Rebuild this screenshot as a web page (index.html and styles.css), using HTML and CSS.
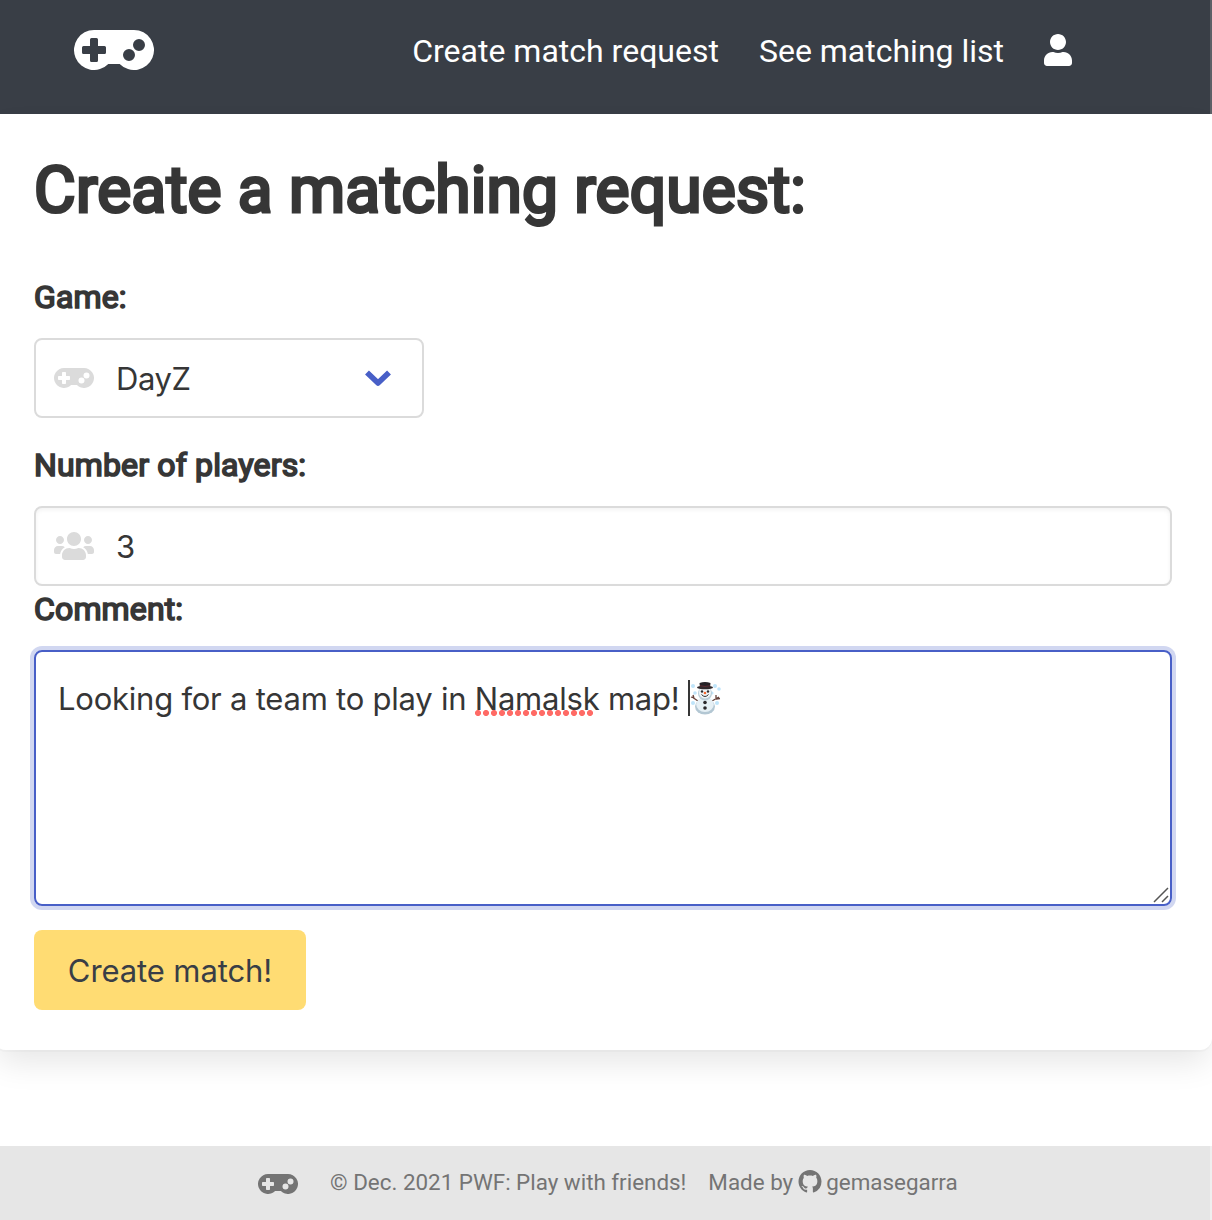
FILE: index.html
```html
<!DOCTYPE html>
<html lang="en">
<head>
<meta charset="utf-8">
<title>Play with friends</title>
<link rel="stylesheet" href="styles.css">
</head>
<body>
<svg class="defs" width="0" height="0" aria-hidden="true">
  <symbol id="gamepad" viewBox="0 96 640 320"><path fill-rule="evenodd" d="M480 96H160a160 160 0 1 0 114.240 272h91.520A160 160 0 1 0 480 96zM256 276a12 12 0 0 1-12 12h-52v52a12 12 0 0 1-12 12h-40a12 12 0 0 1-12-12v-52H76a12 12 0 0 1-12-12v-40a12 12 0 0 1 12-12h52v-52a12 12 0 0 1 12-12h40a12 12 0 0 1 12 12v52h52a12 12 0 0 1 12 12zM440 344a48 48 0 1 1 0-96a48 48 0 0 1 0 96zM520 264a48 48 0 1 1 0-96a48 48 0 0 1 0 96z"/></symbol>
</svg>
<nav class="navbar">
  <svg class="logo"><use href="#gamepad"/></svg>
  <div class="menu">
    <a class="link">Create match request</a>
    <a class="link">See matching list</a>
    <svg class="user" viewBox="0 0 448 512"><path d="M224 256c70.700 0 128-57.300 128-128S294.700 0 224 0 96 57.300 96 128s57.300 128 128 128zm89.600 32h-16.700c-22.200 10.200-46.900 16-72.900 16s-50.600-5.800-72.900-16h-16.700C60.200 288 0 348.200 0 422.400V464c0 26.500 21.500 48 48 48h352c26.500 0 48-21.500 48-48v-41.600c0-74.200-60.200-134.400-134.400-134.400z"/></svg>
  </div>
</nav>
<main class="box">
  <h1 class="title">Create a matching request:</h1>
  <div class="label">Game:</div>
  <div class="control select">
    <svg class="icon pad"><use href="#gamepad"/></svg>
    <span class="value">DayZ</span>
    <svg class="arrow" viewBox="0 0 28 18"><path d="M3 3.500l11 10.500L25 3.500"/></svg>
  </div>
  <div class="label">Number of players:</div>
  <div class="control input">
    <svg class="icon" viewBox="0 0 640 512"><path d="M96 224c35.300 0 64-28.700 64-64s-28.700-64-64-64-64 28.700-64 64 28.700 64 64 64zm448 0c35.300 0 64-28.700 64-64s-28.700-64-64-64-64 28.700-64 64 28.700 64 64 64zm32 32h-64c-17.600 0-33.500 7.100-45.100 18.600 40.300 22.100 68.900 62 75.100 109.400h66c17.700 0 32-14.300 32-32v-32c0-35.300-28.700-64-64-64zm-256 0c61.900 0 112-50.100 112-112S381.900 32 320 32 208 82.100 208 144s50.100 112 112 112zm76.800 32h-8.300c-20.800 10-43.900 16-68.500 16s-47.600-6-68.500-16h-8.300C179.600 288 128 339.600 128 403.200V432c0 26.500 21.500 48 48 48h288c26.500 0 48-21.500 48-48v-28.800c0-63.600-51.600-115.200-115.200-115.200zm-223.700-13.400C161.500 263.100 145.600 256 128 256H64c-35.300 0-64 28.700-64 64v32c0 17.700 14.300 32 32 32h65.900c6.300-47.400 34.900-87.300 75.200-109.400z"/></svg>
    <span class="value">3</span>
  </div>
  <div class="label">Comment:</div>
  <div class="textarea">
    <p class="comment">Looking for a team to play in <span class="misspelt">Namalsk</span> map! </p>
    <i class="caret"></i>
    <svg class="snowman" viewBox="0 0 32 34">
      <g fill="#bfe4fa"><circle cx="3" cy="5" r="2"/><circle cx="5" cy="12" r="1.800"/><circle cx="25" cy="5" r="2"/><circle cx="29" cy="8" r="1.800"/><circle cx="27" cy="22" r="2"/><circle cx="3" cy="22" r="2"/><circle cx="22" cy="12" r="1.500"/></g>
      <path d="M8 20L2 16M4 17l-3-1M4 17l-1-3M22 20l7-4M26 17l0-3M26 18l4-.5" fill="none" stroke="#65413a" stroke-width="1.300"/>
      <ellipse cx="15" cy="25.500" rx="10" ry="8" fill="#b3c7d3"/>
      <ellipse cx="15" cy="23.500" rx="8.800" ry="7.500" fill="#e6f0f5"/>
      <circle cx="15" cy="12.500" r="7" fill="#bccfd9"/><circle cx="15" cy="11.500" r="6" fill="#eef4f7"/>
      <path d="M9.500 2q5.500-2 11 0l-.5 5q-5 2-10 0z" fill="#252226"/>
      <ellipse cx="15" cy="6.500" rx="8" ry="1.800" fill="#30292c"/>
      <path d="M10 4.700q5 1.500 10 0" stroke="#6b2c33" stroke-width=".8" fill="none"/>
      <g fill="#2b292c"><circle cx="12" cy="10.500" r="1.200"/><circle cx="18" cy="10.500" r="1.200"/><circle cx="15" cy="21.500" r="1.800"/><circle cx="15" cy="27" r="1.800"/></g>
      <path d="M11.500 13.500q3.500 4 7 0" stroke="#333" fill="none"/><circle cx="15" cy="12" r="1.300" fill="#f4672e"/>
    </svg>
    <svg class="grip" viewBox="0 0 16 16"><path d="M1 15L15 1M9 15l6-6"/></svg>
  </div>
  <button class="button">Create match!</button>
</main>
<footer class="footer">
  <svg class="foot-logo"><use href="#gamepad"/></svg>
  <span class="copy">© Dec. 2021 PWF: Play with friends!</span>
  <span class="made">Made by</span>
  <svg class="github" viewBox="0 0 16 16"><path d="M8 0C3.580 0 0 3.580 0 8c0 3.540 2.290 6.530 5.470 7.590.4.070.550-.170.550-.380 0-.190-.010-.820-.010-1.490-2.010.370-2.530-.490-2.690-.940-.090-.230-.480-.940-.820-1.130-.280-.150-.680-.520-.010-.530.630-.010 1.080.580 1.230.820.720 1.210 1.870.870 2.330.660.070-.520.280-.870.510-1.070-1.780-.2-3.640-.890-3.640-3.950 0-.870.310-1.590.820-2.150-.080-.2-.360-1.020.080-2.120 0 0 .670-.210 2.200.820.640-.180 1.320-.270 2-.270s1.360.090 2 .270c1.530-1.040 2.200-.820 2.200-.820.440 1.100.160 1.920.080 2.120.510.560.820 1.270.820 2.150 0 3.070-1.870 3.750-3.650 3.950.290.250.540.730.540 1.480 0 1.070-.010 1.930-.010 2.200 0 .210.150.460.550.380A8.010 8.010 0 0 0 16 8c0-4.420-3.580-8-8-8z"/></svg>
  <span class="author">gemasegarra</span>
</footer>
</body>
</html>
```

FILE: styles.css
```css
* { box-sizing: border-box; }
body { margin: 0; background: #fff; color: #363636; font-family: Roboto, sans-serif; font-size: 32px; line-height: 48px; overflow: hidden; }
svg { display: block; flex: none; }
.defs { display: none; }

.navbar { display: flex; align-items: flex-start; justify-content: space-between; height: 114px; padding: 26px 138px 0 74px; background: #393e46; border-right: 2px solid #5d6067; color: #fff; }
.logo { width: 80px; height: 40px; margin-top: 4px; fill: #fff; }
.menu { display: flex; }
.link { margin-right: 40px; padding-top: 1px; white-space: nowrap; }
.user { width: 28px; height: 32px; margin-top: 8px; fill: #fff; }

.box { height: 936px; margin-left: -6px; padding: 41px 40px 40px; background: #fff; border-radius: 0 0 12px 12px; box-shadow: 0 16px 32px -4px rgba(10, 10, 10, .1), 0 2px 0 0 rgba(10, 10, 10, .02); }
.title { margin: 0 0 46px; font-size: 64px; font-weight: 400; line-height: 72px; letter-spacing: .22px; -webkit-text-stroke: 3.200px #363636; }
.label { margin-bottom: 17px; letter-spacing: .15px; -webkit-text-stroke: 1.700px #363636; }
.control { display: flex; align-items: center; height: 80px; border: 2px solid #dbdbdb; border-radius: 8px; padding: 0 18px; font-family: Inter, sans-serif; font-size: 31px; }
.select { width: 390px; margin-bottom: 23px; padding-right: 30px; letter-spacing: -.4px; }
.input { margin-bottom: -1px; box-shadow: inset 0 2px 4px rgba(10, 10, 10, .05); }
.icon { width: 40px; height: 32px; margin-right: 22px; fill: #dbdbdb; }
.pad { height: 20px; }
.value { padding-top: 2px; }
.arrow { width: 28px; height: 18px; margin-left: auto; fill: none; stroke: #485fc7; stroke-width: 5.600px; stroke-linecap: butt; stroke-linejoin: round; }

.textarea { position: relative; display: flex; height: 256px; padding: 23px 22px; border: 2px solid #485fc7; border-radius: 8px; box-shadow: 0 0 0 4px rgba(72, 95, 199, .25); font-family: Inter, sans-serif; font-size: 31px; letter-spacing: -.23px; }
.comment { margin: 0; white-space: pre; }
.misspelt { position: relative; }
.misspelt::after { content: ""; position: absolute; left: 0; bottom: 1px; width: 120px; height: 6px; background: radial-gradient(circle at 3px 3px, #ff6b66 2.700px, transparent 3.300px) 0 0 / 8px 6px; }
.caret { width: 2px; height: 36px; margin-top: 5px; background: #363636; }
.snowman { width: 32px; height: 34px; margin-top: 6px; }
.grip { position: absolute; right: 1px; bottom: 1px; width: 16px; height: 16px; fill: none; stroke: #555; stroke-width: 1.500px; }

.button { display: block; width: 272px; height: 80px; margin-top: 24px; padding: 2px 0 0; border: 0; border-radius: 8px; background: #ffdc73; color: #393e46; font: 31px/48px Inter, sans-serif; letter-spacing: -.1px; white-space: nowrap; }

.footer { display: flex; height: 74px; margin-top: 96px; padding: 19px 0 0 258px; background: #e6e6e6; border-right: 2px solid #efefef; color: #747474; font-size: 22.400px; line-height: 34px; white-space: nowrap; }
.foot-logo { width: 40px; height: 20px; margin: 9px 32px 0 0; fill: #747474; }
.copy { margin-right: 22px; }
.made { margin-right: 5px; }
.github { width: 24px; height: 23px; margin: 5px 4px 0 0; fill: #747474; }
```
